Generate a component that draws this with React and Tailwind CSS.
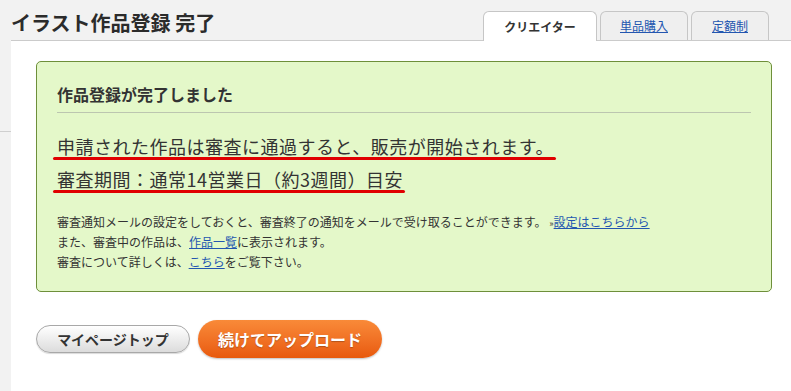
import React from 'react'

const Tab = ({ label, active, width }) => {
  if (active) {
    return (
      <div className={`${width} h-[30px] bg-white border border-b-0 border-[#c6c6c6] rounded-t-[6px] flex items-center justify-center text-[12px] font-bold text-[#333]`}>
        {label}
      </div>
    )
  }
  return (
    <div className={`${width} h-[29px] mb-px bg-[#efefef] border border-b-0 border-[#c6c6c6] rounded-t-[6px] flex items-center justify-center text-[12px]`}>
      <a href="#" className="text-[#2356b0] underline">{label}</a>
    </div>
  )
}

const Marked = ({ children }) => (
  <div className="inline-flex flex-col">
    <span className="text-[18px] leading-[24px] text-[#333] tracking-[0.5px]">{children}</span>
    <div className="-ml-1 -mr-[2px] -mt-[1px] h-[3px] rounded-full bg-[#e00000]"></div>
  </div>
)

const App = () => {
  return (
    <div className="w-[791px] h-[391px] overflow-hidden bg-[#f2f2f2] font-['Noto_Sans_CJK_JP','Noto_Sans',sans-serif] text-[#333] [text-spacing-trim:space-all]">
      <div className="h-[40px] flex items-start pl-[11px] pr-[22px]">
        <h1 className="mt-[10px] text-[20px] leading-[26px] font-bold text-[#2b2b2b]">イラスト作品登録 完了</h1>
        <div className="ml-auto mt-[11px] flex items-end gap-[3px] relative z-10">
          <Tab label="クリエイター" active width="w-[114px]" />
          <Tab label="単品購入" width="w-[88px]" />
          <Tab label="定額制" width="w-[78px]" />
        </div>
      </div>

      <div className="flex h-[351px]">
        <div className="w-[11px]">
          <div className="mt-[91px] h-px bg-[#cfcfcf]"></div>
        </div>
        <div className="flex-1 bg-white border-t border-[#cbcbcb] pl-[25px] pr-[19px] pt-[20px]">
          <div className="bg-[#e4f8c9] border border-[#6e8f3a] rounded-[5px] px-5 pt-[20px] pb-[19px]">
            <h2 className="text-[16px] leading-[24px] font-bold text-[#333]">作品登録が完了しました</h2>
            <div className="mt-[6px] h-px bg-[#bcc6b0]"></div>

            <div className="mt-[21px] flex flex-col items-start gap-[7px]">
              <Marked>申請された作品は審査に通過すると、販売が開始されます。</Marked>
              <Marked>審査期間：通常14営業日（約3週間）目安</Marked>
            </div>

            <div className="mt-[19px] text-[12px] leading-[20px] text-[#333]">
              <p className="h-[20px]">
                審査通知メールの設定をしておくと、審査終了の通知をメールで受け取ることができます。 <span className="text-[9px]">»</span>
                <a href="#" className="text-[#2356b0] underline">設定はこちらから</a>
              </p>
              <p className="h-[20px]">
                また、審査中の作品は、<a href="#" className="text-[#2356b0] underline">作品一覧</a>に表示されます。
              </p>
              <p className="h-[20px]">
                審査について詳しくは、<a href="#" className="text-[#2356b0] underline">こちら</a>をご覧下さい。
              </p>
            </div>
          </div>

          <div className="mt-[28px] flex items-center gap-2">
            <button className="w-[154px] h-[28px] rounded-full border border-[#a8a8a8] bg-gradient-to-b from-white to-[#dcdcdc] text-[14px] font-bold text-[#333] shadow-[0_1px_1px_rgba(0,0,0,0.15)]">
              マイページトップ
            </button>
            <button className="w-[184px] h-[38px] rounded-full bg-gradient-to-b from-[#f98a38] to-[#e8590b] text-[16px] font-bold text-white shadow-[0_1px_2px_rgba(0,0,0,0.25)] [text-shadow:0_1px_1px_rgba(0,0,0,0.25)]">
              続けてアップロード
            </button>
          </div>
        </div>
      </div>
    </div>
  )
}

export default App
